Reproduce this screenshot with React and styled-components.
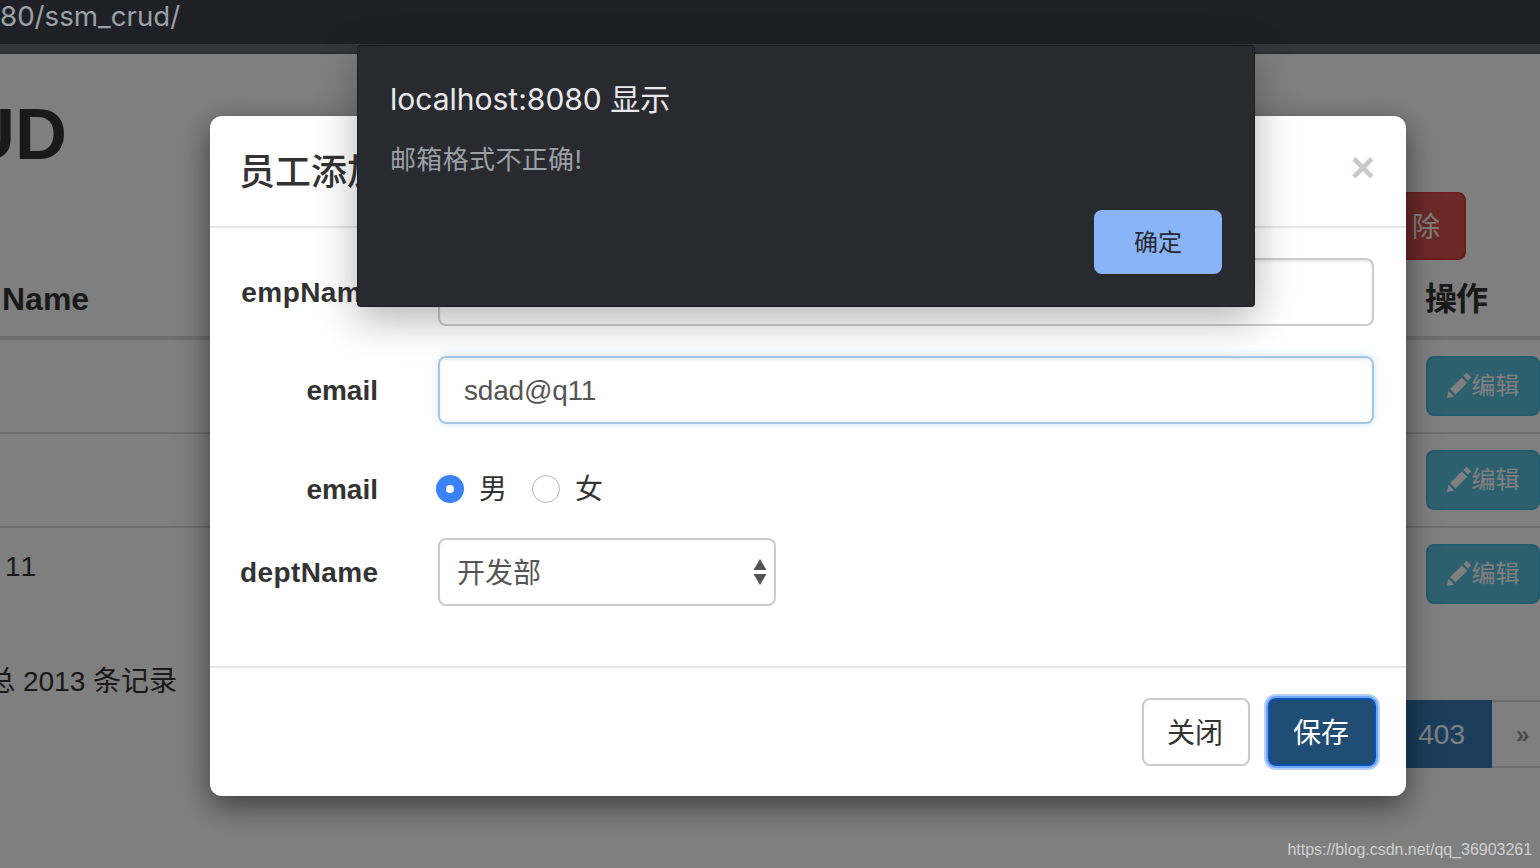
import React from "react";
import styled, { createGlobalStyle } from "styled-components";

const sans = `"Liberation Sans", "Noto Sans CJK SC", sans-serif`;
const chromeUi = `Inter, "Noto Sans CJK SC", sans-serif`;

const Global = createGlobalStyle`
  html, body { margin: 0; padding: 0; background: #1f2026; }
  * { box-sizing: border-box; }
`;

const Screen = styled.div`
  position: relative;
  width: 1540px;
  height: 868px;
  overflow: hidden;
  font-family: ${sans};
`;

const AddressBar = styled.div`
  height: 44px;
  background: #1f2026;
  color: #9aa0a6;
  font: 27.7px/32px ${chromeUi};
  white-space: nowrap;
`;

const BookmarkStrip = styled.div`
  height: 10px;
  background: #35363b;
  border-bottom: 2px solid #2c2d31;
`;

const Page = styled.main`
  position: relative;
  height: 814px;
  background: #fff;
  color: #333;
  font-size: 28px;
  line-height: 40px;
  overflow: hidden;
`;

const ClippedLeft = styled.div`
  display: flex;
  justify-content: flex-end;
  white-space: nowrap;
  width: ${(p) => p.$width}px;
`;

const Heading = styled.h1`
  margin: 40px 0 0;
  font-size: 72px;
  line-height: 80px;
  font-weight: 700;
`;

const Toolbar = styled.div`
  display: flex;
  justify-content: flex-end;
  padding-right: 74px;
  margin-top: 18px;
`;

const DangerButton = styled.div`
  height: 68px;
  padding: 14px 24px 0 60px;
  background: #d9534f;
  border: 2px solid #d43f3a;
  border-radius: 8px;
  color: #fff;
`;

const TableHead = styled.div`
  display: flex;
  justify-content: space-between;
  align-items: center;
  height: 80px;
  padding-top: 2px;
  padding-left: 2px;
  border-bottom: 4px solid #ddd;
  font-size: 32px;
  font-weight: 700;
`;

const ActionCell = styled.div`
  width: 114px;
  margin-right: 1px;
  letter-spacing: -1px;
`;

const TableRow = styled.div`
  display: flex;
  justify-content: space-between;
  align-items: flex-start;
  height: ${(p) => (p.$last ? 92 : 94)}px;
  padding-top: 16px;
  border-bottom: ${(p) => (p.$last ? "none" : "2px solid #ddd")};
`;

const RowValue = styled.div`
  padding-left: 5px;
  padding-top: 3px;
  letter-spacing: 2px;
`;

const EditButton = styled.div`
  display: flex;
  align-items: center;
  justify-content: center;
  gap: 1px;
  width: 114px;
  height: 60px;
  background: #5bc0de;
  border: 2px solid #46b8da;
  border-radius: 8px;
  color: #fff;
  font-size: 24px;
  line-height: 34px;
`;

const PencilIcon = styled.svg`
  width: 24px;
  height: 25px;
  fill: #fff;
  flex: none;
  margin-top: -2px;
`;

const Footer = styled.div`
  display: flex;
  justify-content: space-between;
  align-items: flex-start;
`;

const PageInfo = styled.div`
  padding-top: 42px;
`;

const Pagination = styled.div`
  display: flex;
  margin-top: 80px;
  margin-right: -24px;
`;

const PageCell = styled.div`
  display: flex;
  align-items: center;
  height: 68px;
  padding: ${(p) => (p.$active ? "2px 25px 0 27px" : "2px 24px 0")};
  background: ${(p) => (p.$active ? "#337ab7" : "#fff")};
  color: ${(p) => (p.$active ? "#fff" : "#949494")};
  border: 2px solid ${(p) => (p.$active ? "#337ab7" : "#ddd")};
  border-left: ${(p) => (p.$active ? undefined : "none")};
  width: ${(p) => (p.$active ? "auto" : "72px")};
`;

const Chevrons = styled.span`
  font-size: 24px;
  font-weight: 700;
  line-height: 1;
`;

const Backdrop = styled.div`
  position: absolute;
  inset: 0;
  background: rgba(0, 0, 0, 0.5);
  padding: 62px 0 0 210px;
`;

const Modal = styled.section`
  width: 1196px;
  height: 680px;
  background: #fff;
  border-radius: 12px;
  box-shadow: 0 10px 30px rgba(0, 0, 0, 0.5);
  display: flex;
  flex-direction: column;
`;

const ModalHeader = styled.header`
  display: flex;
  justify-content: space-between;
  align-items: center;
  height: 112px;
  padding: 4px 31px 0 29px;
  border-bottom: 2px solid #e5e5e5;
`;

const ModalTitle = styled.h4`
  margin: 0;
  font-size: 36px;
  line-height: 50px;
  font-weight: 500;
  color: #333;
`;

const Close = styled.span`
  color: #c9c9c9;
  font-size: 42px;
  line-height: 42px;
  font-weight: 700;
  margin-top: -10px;
`;

const ModalBody = styled.form`
  flex: 1;
  margin: 0;
  padding: 30px 32px 0 30px;
  display: flex;
  flex-direction: column;
  gap: 30px;
`;

const FormRow = styled.div`
  display: flex;
  gap: 60px;
  align-items: ${(p) => (p.$top ? "flex-start" : "center")};
  height: ${(p) => (p.$top ? 54 : 68)}px;
  padding-top: ${(p) => (p.$top ? 14 : 0)}px;
`;

const Label = styled.label`
  width: 138px;
  flex: none;
  padding-top: 2px;
  text-align: right;
  font-weight: 700;
  color: #333;
  white-space: nowrap;
  letter-spacing: ${(p) => (p.$spaced ? "0.4px" : "0")};
`;

const TextInput = styled.input`
  flex: 1;
  min-width: 0;
  height: 68px;
  padding: 2px 24px 0;
  font: 28px ${sans};
  letter-spacing: -0.2px;
  color: #555;
  background: #fff;
  border: 2px solid ${(p) => (p.$focus ? "#a3c8e6" : "#ccc")};
  border-radius: 8px;
  outline: none;
  box-shadow: inset 0 2px 2px rgba(0, 0, 0, 0.075)
    ${(p) => (p.$focus ? ", 0 0 8px rgba(102, 175, 233, 0.3)" : "")};
`;

const RadioGroup = styled.div`
  display: flex;
  align-items: center;
  margin-left: -2px;
  height: 40px;
`;

const RadioOption = styled.span`
  display: flex;
  align-items: center;
  gap: 15px;
  width: 96px;
  color: #333;
  padding-top: 4px;
`;

const RadioDot = styled.span`
  display: flex;
  align-items: center;
  justify-content: center;
  width: 28px;
  height: 28px;
  flex: none;
  margin-top: -2px;
  border-radius: 50%;
  background: ${(p) => (p.$checked ? "#3a82f7" : "#fff")};
  border: ${(p) => (p.$checked ? "none" : "1px solid #b5b5b5")};
  &::after {
    content: "";
    width: 8px;
    height: 8px;
    border-radius: 50%;
    background: ${(p) => (p.$checked ? "#fff" : "transparent")};
  }
`;

const SelectBox = styled.div`
  display: flex;
  justify-content: space-between;
  align-items: center;
  width: 338px;
  height: 68px;
  padding: 4px 7px 0 17px;
  border: 2px solid #ccc;
  border-radius: 8px;
  color: #555;
  background: #fff;
`;

const SelectArrows = styled.svg`
  width: 14px;
  height: 28px;
  fill: #555;
  margin-top: -4px;
`;

const ModalFooter = styled.footer`
  display: flex;
  justify-content: flex-end;
  gap: 18px;
  height: 130px;
  padding: 30px;
  border-top: 2px solid #e5e5e5;
`;

const ModalButton = styled.div`
  display: flex;
  align-items: center;
  justify-content: center;
  width: 108px;
  height: 68px;
  padding: 4px 2px 0 0;
  border-radius: 8px;
  border: 2px solid ${(p) => (p.$primary ? "#0f50b4" : "#ccc")};
  background: ${(p) => (p.$primary ? "#204d74" : "#fff")};
  color: ${(p) => (p.$primary ? "#fff" : "#333")};
  box-shadow: ${(p) => (p.$primary ? "0 0 0 2px #6ea6f8, 0 0 0 4px #b4d0f8" : "none")};
`;

const Alert = styled.div`
  position: absolute;
  left: 357px;
  top: 45px;
  width: 898px;
  height: 262px;
  padding: 33px 32px 0;
  background: #292a2f;
  border: 1px solid #1c1d20;
  border-top-color: #17181a;
  border-radius: 4px;
  box-shadow: 0 12px 40px rgba(0, 0, 0, 0.3);
  display: flex;
  flex-direction: column;
  font-family: ${chromeUi};
`;

const AlertTitle = styled.div`
  color: #e8eaed;
  font-size: 30px;
  line-height: 40px;
`;

const AlertMessage = styled.div`
  margin-top: 21px;
  color: #9aa0a6;
  font-size: 26px;
  line-height: 40px;
  letter-spacing: 0.35px;
`;

const AlertActions = styled.div`
  display: flex;
  justify-content: flex-end;
  margin-top: 30px;
`;

const AlertButton = styled.div`
  display: flex;
  align-items: center;
  justify-content: center;
  width: 128px;
  height: 64px;
  padding-bottom: 3px;
  background: #8ab4f8;
  color: #292a2f;
  border-radius: 8px;
  font-size: 24px;
`;

const Watermark = styled.div`
  position: absolute;
  right: 8px;
  bottom: 7px;
  color: #cfcfcf;
  font-size: 16px;
  line-height: 22px;
  letter-spacing: -0.03px;
`;

const Pencil = () => (
  <PencilIcon viewBox="0 0 24 25">
    <path d="M0 25l1.4-7.2 5.6 5.6z" />
    <path d="M3 16L14.8 4.4l5.4 5.4L8.6 21.4z" />
    <path d="M16.4 2.8L19 .3c.4-.4.8-.4 1.2 0l3.4 3.5c.4.4.4.8 0 1.2L21 7.6z" />
  </PencilIcon>
);

const EditAction = () => (
  <EditButton>
    <Pencil />
    编辑
  </EditButton>
);

export default function App() {
  return (
    <Screen>
      <Global />
      <AddressBar>80/ssm_crud/</AddressBar>
      <BookmarkStrip />
      <Page>
        <ClippedLeft $width={67}>
          <Heading>SSM-CRUD</Heading>
        </ClippedLeft>
        <Toolbar>
          <DangerButton>除</DangerButton>
        </Toolbar>
        <TableHead>
          <div>Name</div>
          <ActionCell>操作</ActionCell>
        </TableHead>
        <TableRow>
          <span />
          <EditAction />
        </TableRow>
        <TableRow>
          <span />
          <EditAction />
        </TableRow>
        <TableRow $last>
          <RowValue>11</RowValue>
          <EditAction />
        </TableRow>
        <Footer>
          <PageInfo>
            <ClippedLeft $width={177}>总 2013 条记录</ClippedLeft>
          </PageInfo>
          <Pagination>
            <PageCell $active>403</PageCell>
            <PageCell>
              <Chevrons>»</Chevrons>
            </PageCell>
          </Pagination>
        </Footer>
        <Backdrop>
          <Modal>
            <ModalHeader>
              <ModalTitle>员工添加</ModalTitle>
              <Close>×</Close>
            </ModalHeader>
            <ModalBody>
              <FormRow>
                <Label $spaced>empName</Label>
                <TextInput readOnly value="" />
              </FormRow>
              <FormRow>
                <Label>email</Label>
                <TextInput $focus readOnly value="sdad@q11" />
              </FormRow>
              <FormRow $top>
                <Label>email</Label>
                <RadioGroup>
                  <RadioOption>
                    <RadioDot $checked />男
                  </RadioOption>
                  <RadioOption>
                    <RadioDot />女
                  </RadioOption>
                </RadioGroup>
              </FormRow>
              <FormRow>
                <Label $spaced>deptName</Label>
                <SelectBox>
                  开发部
                  <SelectArrows viewBox="0 0 14 28">
                    <path d="M7 1l6.5 11H.5z" />
                    <path d="M7 27L.5 16h13z" />
                  </SelectArrows>
                </SelectBox>
              </FormRow>
            </ModalBody>
            <ModalFooter>
              <ModalButton>关闭</ModalButton>
              <ModalButton $primary>保存</ModalButton>
            </ModalFooter>
          </Modal>
        </Backdrop>
      </Page>
      <Alert>
        <AlertTitle>localhost:8080 显示</AlertTitle>
        <AlertMessage>邮箱格式不正确!</AlertMessage>
        <AlertActions>
          <AlertButton>确定</AlertButton>
        </AlertActions>
      </Alert>
      <Watermark>https://blog.csdn.net/qq_36903261</Watermark>
    </Screen>
  );
}
